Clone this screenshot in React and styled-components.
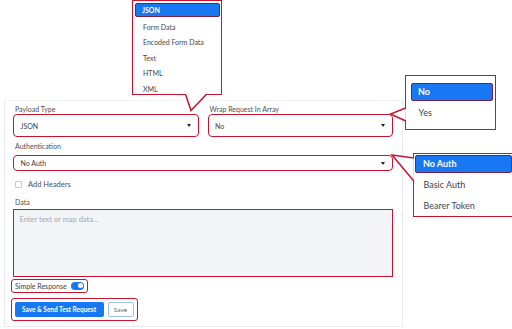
import React from "react";
import styled, { createGlobalStyle } from "styled-components";

const RED = "#c8142f";
const BLUE = "#1877f2";
const MAROON = "#7a1f44";

const GlobalStyle = createGlobalStyle`
  html, body { margin: 0; padding: 0; background: #ffffff; }
  body { font-family: Lato, "Open Sans", "Liberation Sans", sans-serif; color: #3d434b; }
  * { box-sizing: border-box; }
`;

const Canvas = styled.div`
  position: relative;
  width: 512px;
  height: 329px;
  overflow: hidden;
  background: #fff;
`;

const Panel = styled.div`
  margin: 100px 0 0 4px;
  width: 399px;
  height: 227px;
  border: 1px solid #e8ebef;
  border-top-color: #f3f4f6;
  background: #fff;
  padding: 3px 9px 0 8px;
  display: flex;
  flex-direction: column;
`;

const Row = styled.div`
  display: grid;
  grid-template-columns: 1fr 1fr;
  column-gap: 9px;
`;

const Field = styled.div`
  display: flex;
  flex-direction: column;
  margin-top: ${(p) => p.$mt || 0}px;
`;

const Label = styled.div`
  font-size: 7px;
  line-height: 10px;
  height: 10px;
  color: #4a5058;
  padding-left: 2px;
  margin-bottom: ${(p) => p.$mb || 0}px;
  white-space: nowrap;
`;

const Select = styled.div`
  height: ${(p) => p.$h}px;
  border: 1.5px solid ${RED};
  border-radius: 4px;
  background: #fff;
  display: flex;
  align-items: center;
  justify-content: space-between;
  padding: 0 7px 0 6.5px;
  font-size: 7px;
  color: #3a3f46;
`;

const Caret = styled.span`
  width: 0;
  height: 0;
  border-left: 2.5px solid transparent;
  border-right: 2.5px solid transparent;
  border-top: 3px solid #222;
`;

const CheckRow = styled.label`
  display: flex;
  align-items: center;
  gap: 6px;
  height: 10px;
  margin-top: 8px;
  padding-left: 2px;
  font-size: 7.5px;
  color: #4a5058;
`;

const Box = styled.span`
  width: 7px;
  height: 7px;
  border: 1px solid #c5cad2;
  border-radius: 1px;
  background: #fff;
`;

const TextArea = styled.div`
  height: 68px;
  border: 1.5px solid ${RED};
  background: #f2f4f7;
  padding: 5px 5.5px;
  font-size: 7.5px;
  color: #a3a9b1;
`;

const Annot = styled.div`
  display: flex;
  align-items: center;
  gap: ${(p) => p.$gap || 0}px;
  align-self: flex-start;
  border: 1.5px solid ${RED};
  border-radius: 3px;
  margin-left: -2px;
  margin-top: ${(p) => p.$mt}px;
  height: ${(p) => p.$h}px;
  padding: ${(p) => p.$pad};
`;

const SmallText = styled.span`
  font-size: 7px;
  color: #3d434b;
`;

const Toggle = styled.span`
  position: relative;
  width: 13px;
  height: 7.5px;
  border-radius: 4px;
  background: ${BLUE};
  &::after {
    content: "";
    position: absolute;
    right: 1.2px;
    top: 1.2px;
    width: 5px;
    height: 5px;
    border-radius: 50%;
    background: #fff;
  }
`;

const PrimaryButton = styled.button`
  height: 15.5px;
  width: 89px;
  border: none;
  border-radius: 2px;
  background: ${BLUE};
  color: #fff;
  font-family: inherit;
  font-size: 6.5px;
  font-weight: 700;
  padding: 0;
`;

const GhostButton = styled.button`
  height: 15.5px;
  width: 26px;
  border: 1px solid #9ec3f0;
  border-radius: 2px;
  background: #fff;
  color: #5c6670;
  font-family: inherit;
  font-size: 6.5px;
  padding: 0;
`;

/* ---------- overlay menus (callouts) ---------- */

const Menu = styled.div`
  position: absolute;
  left: ${(p) => p.$left}px;
  top: ${(p) => p.$top}px;
  width: ${(p) => p.$w}px;
  height: ${(p) => p.$h}px;
  border: 1.5px solid ${RED};
  background: #fff;
  padding: ${(p) => p.$pad};
  display: flex;
  flex-direction: column;
  z-index: 2;
`;

const MenuItem = styled.div`
  height: ${(p) => p.$h}px;
  flex: none;
  display: flex;
  align-items: center;
  padding-left: ${(p) => p.$pl}px;
  font-size: ${(p) => p.$fs}px;
  color: #41474f;
  white-space: nowrap;
  ${(p) =>
    p.$active &&
    `
    background: ${BLUE};
    color: #fff;
    font-weight: 700;
    border: 1.5px solid ${MAROON};
    border-radius: 2px;
    padding-left: ${p.$pl - 1.5}px;
  `}
  margin-bottom: ${(p) => p.$mb || 0}px;
`;

const Connectors = styled.svg`
  position: absolute;
  left: 0;
  top: 0;
  width: 512px;
  height: 329px;
  pointer-events: none;
  z-index: 3;
`;

export default function App() {
  return (
    <Canvas>
      <GlobalStyle />
      <Panel>
        <Row>
          <Field>
            <Label>Payload Type</Label>
            <Select $h={23}>
              <span>JSON</span>
              <Caret />
            </Select>
          </Field>
          <Field>
            <Label>Wrap Request In Array</Label>
            <Select $h={23}>
              <span>No</span>
              <Caret />
            </Select>
          </Field>
        </Row>
        <Field $mt={4}>
          <Label $mb={4}>Authentication</Label>
          <Select $h={16}>
            <span>No Auth</span>
            <Caret />
          </Select>
        </Field>
        <CheckRow>
          <Box />
          <span>Add Headers</span>
        </CheckRow>
        <Field $mt={8}>
          <Label $mb={2}>Data</Label>
          <TextArea>Enter text or map data...</TextArea>
        </Field>
        <Annot $mt={2} $h={14} $gap={4} $pad="0 3px 0 3px">
          <SmallText>Simple Response</SmallText>
          <Toggle />
        </Annot>
        <Annot $mt={5} $h={23} $gap={4} $pad="0 3px 0 2.5px">
          <PrimaryButton>Save &amp; Send Test Request</PrimaryButton>
          <GhostButton>Save</GhostButton>
        </Annot>
      </Panel>

      <Menu $left={132} $top={0} $w={90} $h={95} $pad="1.5px 1.5px 0 1.5px">
        <MenuItem $active $h={14} $pl={8} $fs={7} $mb={2.5}>JSON</MenuItem>
        <MenuItem $h={15.5} $pl={8.5} $fs={7}>Form Data</MenuItem>
        <MenuItem $h={15.5} $pl={8.5} $fs={7}>Encoded Form Data</MenuItem>
        <MenuItem $h={15.5} $pl={8.5} $fs={7}>Text</MenuItem>
        <MenuItem $h={15.5} $pl={8.5} $fs={7}>HTML</MenuItem>
        <MenuItem $h={15.5} $pl={8.5} $fs={7}>XML</MenuItem>
      </Menu>

      <Menu $left={405} $top={75} $w={91} $h={55} $pad="6.5px 2.5px 0 4.5px">
        <MenuItem $active $h={18} $pl={8} $fs={9} $mb={3}>No</MenuItem>
        <MenuItem $h={18} $pl={8} $fs={9}>Yes</MenuItem>
      </Menu>

      <Menu $left={413} $top={153} $w={100} $h={64} $pad="0.5px 0 0 0.5px">
        <MenuItem $active $h={18} $pl={9} $fs={9} $mb={1.5}>No Auth</MenuItem>
        <MenuItem $h={21} $pl={9} $fs={9}>Basic Auth</MenuItem>
        <MenuItem $h={21} $pl={9} $fs={9}>Bearer Token</MenuItem>
      </Menu>

      <Connectors viewBox="0 0 512 329">
        <polygon points="185.5,93.5 206.5,93.5 191,110" fill="#fff" />
        <polyline points="185.5,94.2 191,110.5 206.5,94.2" fill="none" stroke={RED} strokeWidth="1.5" strokeLinejoin="miter" />
        <polygon points="405.8,108 405.8,121 391,114" fill="#fff" />
        <polyline points="405.8,108 390.5,114 405.8,121" fill="none" stroke={RED} strokeWidth="1.5" />
        <polygon points="413.8,158 413.8,181 392,155" fill="#fff" />
        <polyline points="413.8,158 392,155 413.8,181" fill="none" stroke={RED} strokeWidth="1.5" />
      </Connectors>
    </Canvas>
  );
}
